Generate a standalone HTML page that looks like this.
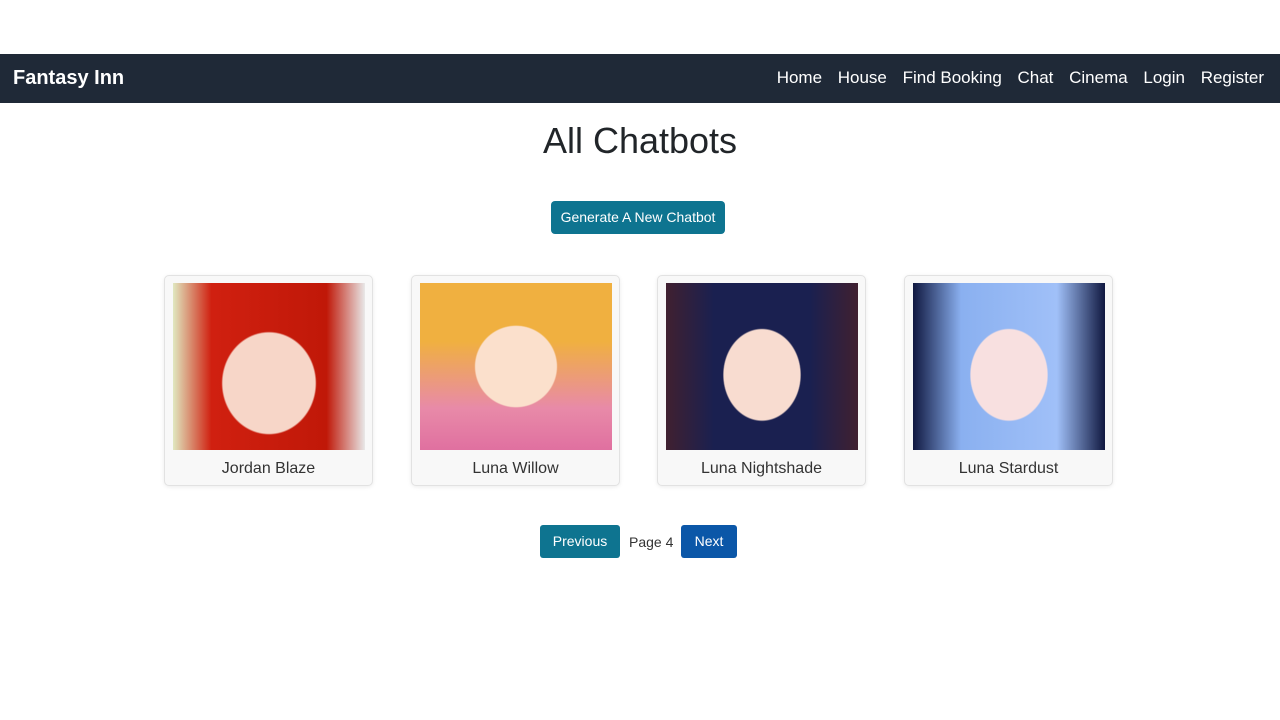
<!DOCTYPE html>
<html><head><style>
body{margin:0;background:#fff;font-family:"Liberation Sans",sans-serif;width:1280px;height:720px;overflow:hidden;position:relative}
.nav{position:absolute;top:54px;left:0;width:1280px;height:49px;background:#1f2937;color:#fff}
.brand{position:absolute;left:13px;top:13px;font-size:20px;font-weight:bold}
.links{position:absolute;right:16px;top:14px;font-size:17px}
.links span{margin-left:15.7px}
h1{position:absolute;top:120px;left:0;width:1280px;text-align:center;margin:0;font-weight:normal;font-size:36px;color:#212529}
.gen{position:absolute;left:551px;top:201px;width:174px;height:33px;background:#0e7490;color:#fff;border-radius:4px;font-size:14px;text-align:center;line-height:33px}
.card{position:absolute;top:275px;width:207px;height:209px;border:1px solid #e2e2e2;border-radius:5px;background:#f8f8f8;box-shadow:0 1px 4px rgba(0,0,0,.08)}
.img{position:absolute;left:8px;top:7px;width:192px;height:167px}
.nm{position:absolute;top:184px;width:100%;text-align:center;font-size:16px;color:#333}
.btn{position:absolute;top:525px;height:33px;line-height:33px;color:#fff;border-radius:3px;font-size:14px;text-align:center}
</style></head><body>
<div class="nav"><div class="brand">Fantasy Inn</div><div class="links"><span>Home</span><span>House</span><span>Find Booking</span><span>Chat</span><span>Cinema</span><span>Login</span><span>Register</span></div></div>
<h1>All Chatbots</h1>
<div class="gen">Generate A New Chatbot</div>
<div class="card" style="left:164px"><div class="img" style="background:radial-gradient(ellipse 40% 50% at 50% 60%,#f7d6c8 60%,transparent 62%),linear-gradient(90deg,#e0e8c0,#d02010 20%,#c01808 80%,#e8e8e8)"></div><div class="nm">Jordan Blaze</div></div>
<div class="card" style="left:411px"><div class="img" style="background:radial-gradient(ellipse 35% 40% at 50% 50%,#fbe0cc 60%,transparent 62%),linear-gradient(180deg,#f0b040 0 35%,#e88aa8 75%,#e070a0),#302020"></div><div class="nm">Luna Willow</div></div>
<div class="card" style="left:657px"><div class="img" style="background:radial-gradient(ellipse 33% 45% at 50% 55%,#f8dcd0 60%,transparent 62%),linear-gradient(90deg,#402030,#1a2050 25%,#1a2050 75%,#402030)"></div><div class="nm">Luna Nightshade</div></div>
<div class="card" style="left:904px"><div class="img" style="background:radial-gradient(ellipse 33% 45% at 50% 55%,#f8e0e0 60%,transparent 62%),linear-gradient(90deg,#101840,#8ab0f0 25%,#a0c0f8 75%,#101840)"></div><div class="nm">Luna Stardust</div></div>
<div class="btn" style="left:540px;width:80px;background:#0e7490">Previous</div>
<div style="position:absolute;left:629px;top:534px;font-size:14px;color:#333">Page 4</div>
<div class="btn" style="left:681px;width:56px;background:#0b57a8">Next</div>
</body></html>
